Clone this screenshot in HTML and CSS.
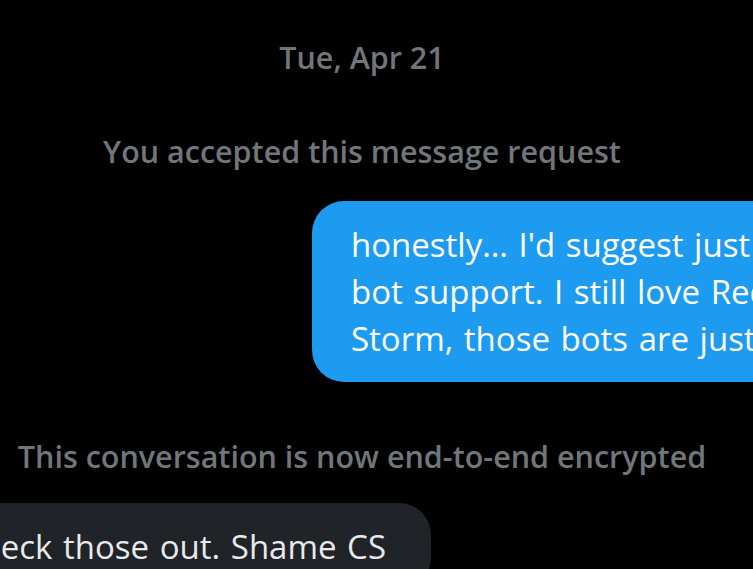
FILE: index.html
```html
<!DOCTYPE html>
<html>
<head>
<meta charset="utf-8">
<link rel="stylesheet" href="styles.css">
</head>
<body>
<div class="thread">
  <div class="date">Tue, Apr 21</div>
  <div class="notice accepted">You accepted this message request</div>
  <div class="row-out">
    <div class="bubble out">honestly… I'd suggest just playing<br>bot support. I still love Red<br>Storm, those bots are just great</div>
  </div>
  <div class="notice encrypted">This conversation is now end-to-end encrypted</div>
  <div class="row-in">
    <div class="bubble in">Yeah, I'll check those out. Shame CS</div>
  </div>
</div>
</body>
</html>
```
FILE: styles.css
```css
html, body {
  margin: 0;
  padding: 0;
  background: #000;
  overflow: hidden;
  height: 569px;
}
.thread {
  width: 1000px;
  margin-left: -138px;
  display: flex;
  flex-direction: column;
  font-family: "Open Sans", "Noto Sans", sans-serif;
}
.date, .notice {
  text-align: center;
  color: #71767b;
  font-weight: 600;
  font-size: 30.5px;
  line-height: 40px;
}
.date { margin-top: 37px; }
.accepted { margin-top: 54px; }
.row-out {
  display: flex;
  padding-left: 450px;
  margin-top: 30px;
}
.bubble {
  font-size: 33px;
  line-height: 47px;
  white-space: nowrap;
  border-radius: 32px;
}
.out {
  background: #1d9bf0;
  color: #fff;
  padding: 20px 39px 20px 39px;
  border-bottom-right-radius: 4px;
  word-spacing: 2px;
}
.encrypted { margin-top: 54px; }
.row-in {
  display: flex;
  justify-content: flex-end;
  width: 569px;
  margin-top: 27px;
}
.in {
  background: #202327;
  color: #e7e9ea;
  padding: 20px 45px 20px 39px;
  word-spacing: 2px;
}
```
